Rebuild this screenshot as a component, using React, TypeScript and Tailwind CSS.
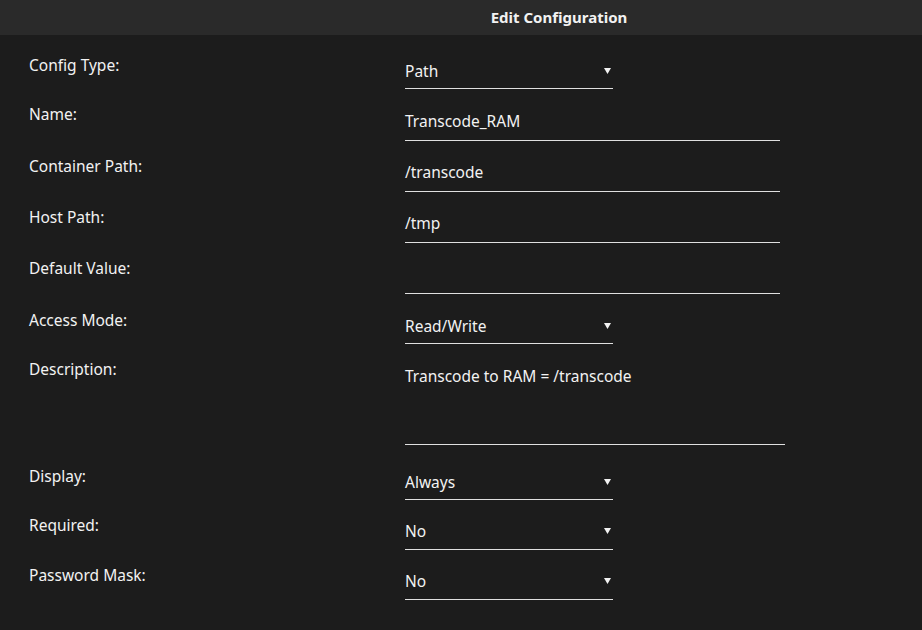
import React from "react";

const Arrow = () => (
  <svg width="7" height="6" viewBox="0 0 7 6" className="block">
    <path d="M0 0 H7 L3.5 6 Z" fill="#f2f2f2" />
  </svg>
);

type RowProps = {
  label: string;
  labelPt: string;
  children: React.ReactNode;
};

const Row = ({ label, labelPt, children }: RowProps) => (
  <div className="flex items-start">
    <div className={`w-[405px] shrink-0 pl-[29px] leading-[20px] ${labelPt}`}>{label}</div>
    {children}
  </div>
);

export default function App() {
  return (
    <div
      className="w-[922px] h-[630px] bg-[#1c1c1c] text-[#f2f2f2] text-[15.5px] overflow-hidden"
      style={{ fontFamily: '"Noto Sans", "Open Sans", sans-serif' }}
    >
      <div className="h-[35px] bg-[#2a2a2a] flex items-center justify-center pl-[196px] font-bold text-[15px]">
        Edit Configuration
      </div>

      <Row label="Config Type:" labelPt="pt-[20px]">
        <div className="w-[208px] pt-[26px] pb-[7px] border-b border-[#e0e0e0] flex items-center justify-between leading-[20px] pr-[2px]">
          <span>Path</span>
          <Arrow />
        </div>
      </Row>

      <Row label="Name:" labelPt="pt-[15px]">
        <div className="w-[375px] pt-[22px] pb-[9px] border-b border-[#e0e0e0] leading-[20px]">Transcode_RAM</div>
      </Row>

      <Row label="Container Path:" labelPt="pt-[15px]">
        <div className="w-[375px] pt-[21px] pb-[9px] border-b border-[#e0e0e0] leading-[20px]">/transcode</div>
      </Row>

      <Row label="Host Path:" labelPt="pt-[15px]">
        <div className="w-[375px] pt-[21px] pb-[9px] border-b border-[#e0e0e0] leading-[20px]">/tmp</div>
      </Row>

      <Row label="Default Value:" labelPt="pt-[15px]">
        <div className="w-[375px] pt-[21px] pb-[9px] border-b border-[#e0e0e0] leading-[20px] h-[51px]"></div>
      </Row>

      <Row label="Access Mode:" labelPt="pt-[16px]">
        <div className="w-[208px] pt-[22px] pb-[7px] border-b border-[#e0e0e0] flex items-center justify-between leading-[20px] pr-[2px]">
          <span>Read/Write</span>
          <Arrow />
        </div>
      </Row>

      <Row label="Description:" labelPt="pt-[15px]">
        <div className="w-[380px] h-[101px] pt-[22px] border-b border-[#e0e0e0] leading-[20px]">
          Transcode to RAM = /transcode
        </div>
      </Row>

      <Row label="Display:" labelPt="pt-[21px]">
        <div className="w-[208px] pt-[27px] pb-[7px] border-b border-[#e0e0e0] flex items-center justify-between leading-[20px] pr-[2px]">
          <span>Always</span>
          <Arrow />
        </div>
      </Row>

      <Row label="Required:" labelPt="pt-[15px]">
        <div className="w-[208px] pt-[21px] pb-[8px] border-b border-[#e0e0e0] flex items-center justify-between leading-[20px] pr-[2px]">
          <span>No</span>
          <Arrow />
        </div>
      </Row>

      <Row label="Password Mask:" labelPt="pt-[15px]">
        <div className="w-[208px] pt-[21px] pb-[8px] border-b border-[#e0e0e0] flex items-center justify-between leading-[20px] pr-[2px]">
          <span>No</span>
          <Arrow />
        </div>
      </Row>
    </div>
  );
}
